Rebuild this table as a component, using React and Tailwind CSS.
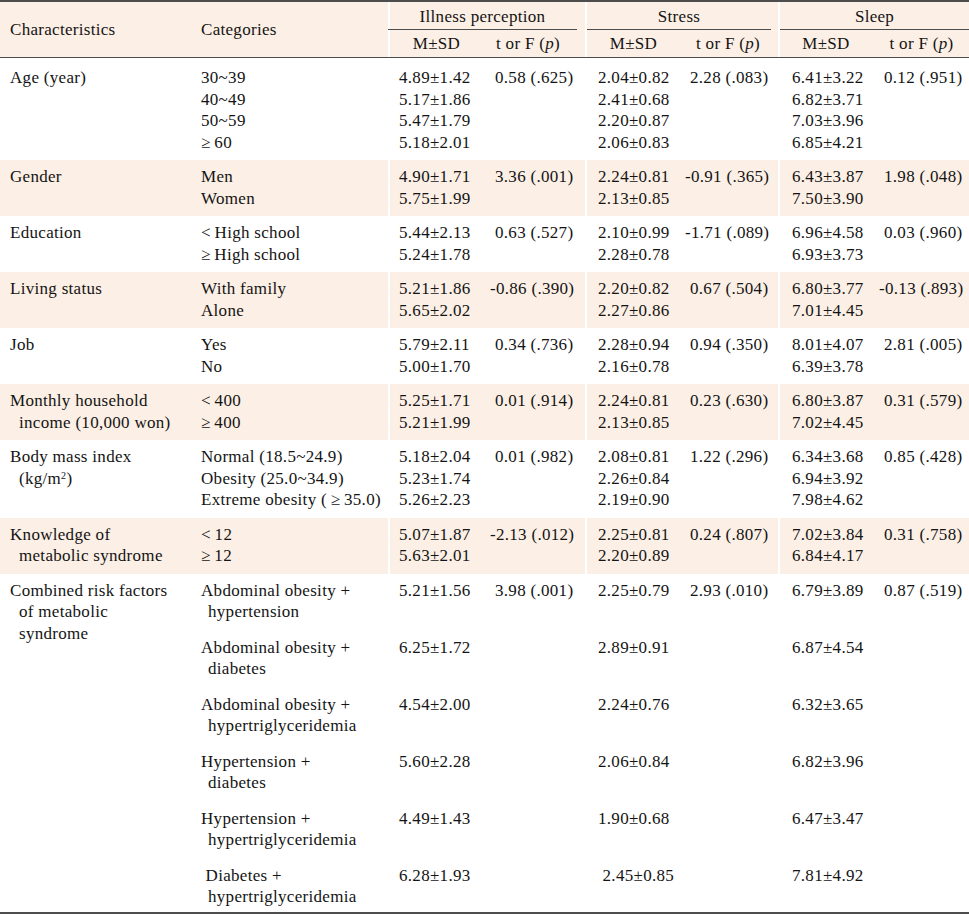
import React from 'react';

const SHADE = 'bg-[#fcefe5]';

const rows = [
  {
    label: ['Age (year)'],
    cats: ['30~39', '40~49', '50~59', '≥\u200960'],
    ill: ['4.89±1.42', '5.17±1.86', '5.47±1.79', '5.18±2.01'],
    illT: '0.58 (.625)',
    str: ['2.04±0.82', '2.41±0.68', '2.20±0.87', '2.06±0.83'],
    strT: '2.28 (.083)',
    slp: ['6.41±3.22', '6.82±3.71', '7.03±3.96', '6.85±4.21'],
    slpT: '0.12 (.951)',
    first: true,
  },
  {
    label: ['Gender'],
    cats: ['Men', 'Women'],
    ill: ['4.90±1.71', '5.75±1.99'],
    illT: '3.36 (.001)',
    str: ['2.24±0.81', '2.13±0.85'],
    strT: '-0.91 (.365)',
    slp: ['6.43±3.87', '7.50±3.90'],
    slpT: '1.98 (.048)',
    shaded: true,
  },
  {
    label: ['Education'],
    cats: ['<\u2009High school', '≥\u2009High school'],
    ill: ['5.44±2.13', '5.24±1.78'],
    illT: '0.63 (.527)',
    str: ['2.10±0.99', '2.28±0.78'],
    strT: '-1.71 (.089)',
    slp: ['6.96±4.58', '6.93±3.73'],
    slpT: '0.03 (.960)',
  },
  {
    label: ['Living status'],
    cats: ['With family', 'Alone'],
    ill: ['5.21±1.86', '5.65±2.02'],
    illT: '-0.86 (.390)',
    str: ['2.20±0.82', '2.27±0.86'],
    strT: '0.67 (.504)',
    slp: ['6.80±3.77', '7.01±4.45'],
    slpT: '-0.13 (.893)',
    shaded: true,
  },
  {
    label: ['Job'],
    cats: ['Yes', 'No'],
    ill: ['5.79±2.11', '5.00±1.70'],
    illT: '0.34 (.736)',
    str: ['2.28±0.94', '2.16±0.78'],
    strT: '0.94 (.350)',
    slp: ['8.01±4.07', '6.39±3.78'],
    slpT: '2.81 (.005)',
  },
  {
    label: ['Monthly household', 'income (10,000 won)'],
    cats: ['<\u2009400', '≥\u2009400'],
    ill: ['5.25±1.71', '5.21±1.99'],
    illT: '0.01 (.914)',
    str: ['2.24±0.81', '2.13±0.85'],
    strT: '0.23 (.630)',
    slp: ['6.80±3.87', '7.02±4.45'],
    slpT: '0.31 (.579)',
    shaded: true,
  },
  {
    label: ['Body mass index', <>(kg/m<sup className="text-[10px]">2</sup>)</>],
    cats: ['Normal (18.5~24.9)', 'Obesity (25.0~34.9)', 'Extreme obesity (\u2009≥\u200935.0)'],
    ill: ['5.18±2.04', '5.23±1.74', '5.26±2.23'],
    illT: '0.01 (.982)',
    str: ['2.08±0.81', '2.26±0.84', '2.19±0.90'],
    strT: '1.22 (.296)',
    slp: ['6.34±3.68', '6.94±3.92', '7.98±4.62'],
    slpT: '0.85 (.428)',
  },
  {
    label: ['Knowledge of', 'metabolic syndrome'],
    cats: ['<\u200912', '≥\u200912'],
    ill: ['5.07±1.87', '5.63±2.01'],
    illT: '-2.13 (.012)',
    str: ['2.25±0.81', '2.20±0.89'],
    strT: '0.24 (.807)',
    slp: ['7.02±3.84', '6.84±4.17'],
    slpT: '0.31 (.758)',
    shaded: true,
  },
];

const combined = [
  { cat: ['Abdominal obesity +', 'hypertension'], ill: '5.21±1.56', illT: '3.98 (.001)', str: '2.25±0.79', strT: '2.93 (.010)', slp: '6.79±3.89', slpT: '0.87 (.519)' },
  { cat: ['Abdominal obesity +', 'diabetes'], ill: '6.25±1.72', str: '2.89±0.91', slp: '6.87±4.54' },
  { cat: ['Abdominal obesity +', 'hypertriglyceridemia'], ill: '4.54±2.00', str: '2.24±0.76', slp: '6.32±3.65' },
  { cat: ['Hypertension +', 'diabetes'], ill: '5.60±2.28', str: '2.06±0.84', slp: '6.82±3.96' },
  { cat: ['Hypertension +', 'hypertriglyceridemia'], ill: '4.49±1.43', str: '1.90±0.68', slp: '6.47±3.47' },
  { cat: [' Diabetes +', 'hypertriglyceridemia'], ill: '6.28±1.93', str: ' 2.45±0.85', slp: '7.81±4.92', last: true },
];

const sep = 'shadow-[inset_2px_0_0_#ffffff]';

function Lines({ items }) {
  return items.map((t, i) => <div key={i}>{t}</div>);
}

function Stat({ value }) {
  if (!value) return null;
  const neg = value.startsWith('-');
  return <div className={neg ? '-ml-[5px]' : ''}>{value}</div>;
}

function Hanging({ items }) {
  return (
    <div>
      {items.map((t, i) => (
        <div key={i} className={i > 0 ? 'pl-[9px]' : ''}>{t}</div>
      ))}
    </div>
  );
}

export default function App() {
  return (
    <div className="w-[969px] bg-white text-[#141414] font-['Liberation_Serif',serif] text-[17px] leading-[21.5px] tracking-[0.3px]">
      <table className="w-[969px] table-fixed border-collapse border-t-2 border-b-2 border-[#4d4d4d]">
        <colgroup>
          <col className="w-[191px]" />
          <col className="w-[197px]" />
          <col className="w-[97px]" />
          <col className="w-[100px]" />
          <col className="w-[97px]" />
          <col className="w-[96px]" />
          <col className="w-[96px]" />
          <col className="w-[95px]" />
        </colgroup>
        <thead className={SHADE}>
          <tr className="h-[27px]">
            <th rowSpan={2} className="pl-[10px] text-left font-normal align-middle border-b border-[#4d4d4d]">Characteristics</th>
            <th rowSpan={2} className="pl-[10px] text-left font-normal align-middle border-b border-[#4d4d4d]">Categories</th>
            <th colSpan={2} className={`p-0 font-normal align-bottom ${sep}`}>
              <div className="mr-[8px] border-b border-[#4d4d4d] pb-[1px] pt-[4px]">Illness perception</div>
            </th>
            <th colSpan={2} className={`p-0 font-normal align-bottom ${sep}`}>
              <div className="ml-[2px] mr-[7px] border-b border-[#4d4d4d] pb-[1px] pt-[4px]">Stress</div>
            </th>
            <th colSpan={2} className={`p-0 font-normal align-bottom ${sep}`}>
              <div className="ml-[2px] border-b border-[#4d4d4d] pb-[1px] pt-[4px]">Sleep</div>
            </th>
          </tr>
          <tr className="h-[28px]">
            <th className={`font-normal border-b border-[#4d4d4d] ${sep}`}>M±SD</th>
            <th className="font-normal border-b border-[#4d4d4d] pr-[14px]">t or F (<i>p</i>)</th>
            <th className={`font-normal border-b border-[#4d4d4d] ${sep}`}>M±SD</th>
            <th className="font-normal border-b border-[#4d4d4d] pr-[4px]">t or F (<i>p</i>)</th>
            <th className={`font-normal border-b border-[#4d4d4d] ${sep}`}>M±SD</th>
            <th className="font-normal border-b border-[#4d4d4d]">t or F (<i>p</i>)</th>
          </tr>
        </thead>
        <tbody>
          {rows.map((r, idx) => {
            const pad = r.first ? 'pt-[9px] pb-[7px]' : 'pt-[6px] pb-[7px]';
            return (
              <tr key={idx} className={r.shaded ? SHADE : ''}>
                <td className={`align-top pl-[10px] ${pad}`}>
                  <Hanging items={r.label} />
                </td>
                <td className={`align-top pl-[10px] whitespace-nowrap ${pad}`}>
                  <Lines items={r.cats} />
                </td>
                <td className={`align-top pl-[11px] ${pad} ${sep}`}>
                  <Lines items={r.ill} />
                </td>
                <td className={`align-top pl-[10px] whitespace-nowrap ${pad}`}>
                  <Stat value={r.illT} />
                </td>
                <td className={`align-top pl-[13px] ${pad} ${sep}`}>
                  <Lines items={r.str} />
                </td>
                <td className={`align-top pl-[8px] whitespace-nowrap ${pad}`}>
                  <Stat value={r.strT} />
                </td>
                <td className={`align-top pl-[14px] ${pad} ${sep}`}>
                  <Lines items={r.slp} />
                </td>
                <td className={`align-top pl-[10px] whitespace-nowrap ${pad}`}>
                  <Stat value={r.slpT} />
                </td>
              </tr>
            );
          })}
          {combined.map((c, idx) => {
            const pad = c.last ? 'pt-[6px] pb-[4px]' : 'pt-[6px] pb-[8px]';
            return (
              <tr key={`c${idx}`}>
                {idx === 0 && (
                  <td rowSpan={combined.length} className="align-top pl-[10px] pt-[6px]">
                    <Hanging items={['Combined risk factors', 'of metabolic', 'syndrome']} />
                  </td>
                )}
                <td className={`align-top pl-[10px] whitespace-pre ${pad}`}>
                  <div>{c.cat[0]}</div>
                  <div className="pl-[7px]">{c.cat[1]}</div>
                </td>
                <td className={`align-top pl-[11px] ${pad}`}>{c.ill}</td>
                <td className={`align-top pl-[10px] whitespace-nowrap ${pad}`}>
                  <Stat value={c.illT} />
                </td>
                <td className={`align-top pl-[13px] whitespace-pre ${pad}`}>{c.str}</td>
                <td className={`align-top pl-[8px] whitespace-nowrap ${pad}`}>
                  <Stat value={c.strT} />
                </td>
                <td className={`align-top pl-[14px] ${pad}`}>{c.slp}</td>
                <td className={`align-top pl-[10px] whitespace-nowrap ${pad}`}>
                  <Stat value={c.slpT} />
                </td>
              </tr>
            );
          })}
        </tbody>
      </table>
    </div>
  );
}
